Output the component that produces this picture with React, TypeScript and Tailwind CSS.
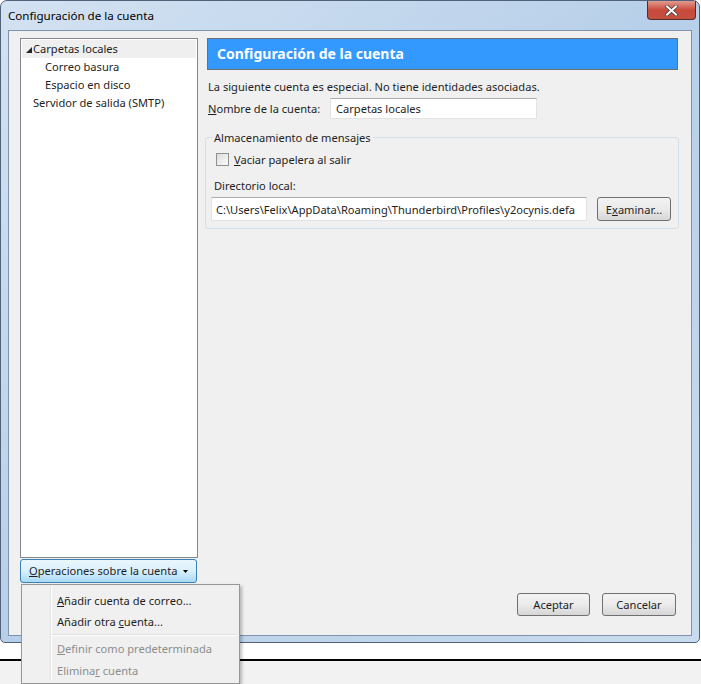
const treeItems = [
    { label: 'Correo basura' },
    { label: 'Espacio en disco' },
];

const Btn = ({ children, className = '' }: { children: React.ReactNode; className?: string }) => (
    <div className={`flex items-center justify-center h-[23px] border border-[#707070] rounded-[3px] bg-gradient-to-b from-[#f2f2f2] via-[#ebebeb] to-[#d6d6d6] text-[#1e1e1e] ${className}`}>
        {children}
    </div>
);

const App = () => {
    return (
        <div className="relative w-[701px] h-[684px] overflow-hidden bg-white text-[11.1px] leading-none text-[#1e1e1e] font-['Noto_Sans',sans-serif]">
            {/* Window */}
            <div className="h-[643px] w-[700px] flex flex-col rounded-t-[7px] rounded-b-[5px] border border-[#4f627a] bg-gradient-to-br from-[#d3e2f2] via-[#b7cfe9] to-[#c9dbee] px-[7px] pb-[6px]">
                {/* Title bar */}
                <div className="h-[29px] flex items-start justify-between">
                    <span className="pt-[9px] text-[11.6px] text-black">Configuración de la cuenta</span>
                    <div className="mr-[-4px] w-[49px] h-[19px] rounded-b-[4px] border border-t-0 border-[#5a2a2a] bg-gradient-to-b from-[#e19a8f] via-[#c9493c] to-[#c2503f] flex items-center justify-center">
                        <svg width="13" height="11" viewBox="0 0 13 11">
                            <path d="M2 1.5 L11 9.5 M11 1.5 L2 9.5" stroke="#3a3a3a" strokeWidth="3.4" strokeLinecap="square" />
                            <path d="M2 1.5 L11 9.5 M11 1.5 L2 9.5" stroke="#ffffff" strokeWidth="2" strokeLinecap="square" />
                        </svg>
                    </div>
                </div>

                {/* Client area */}
                <div className="flex-1 flex border border-[#7f93ab] bg-[#f0f0f0] pl-[11px] pr-[13px] pt-[7px]">
                    {/* Left column */}
                    <div className="w-[178px] flex flex-col">
                        <div className="h-[520px] bg-white border border-[#828790] pt-[1px] px-[1px]">
                            <div className="h-[18px] flex items-center bg-[#efefef]">
                                <svg width="9" height="9" viewBox="0 0 9 9" className="ml-[2px]">
                                    <polygon points="8,2 8,8 2,8" fill="#262626" />
                                </svg>
                                <span>Carpetas locales</span>
                            </div>
                            {treeItems.map((item) => (
                                <div key={item.label} className="h-[18px] flex items-center pl-[23px]">
                                    {item.label}
                                </div>
                            ))}
                            <div className="h-[18px] flex items-center pl-[11px]">Servidor de salida (SMTP)</div>
                        </div>
                        <div className="mt-[1px] w-[177px] h-[24px] flex items-center whitespace-nowrap pl-[8px] border border-[#3c7fb1] rounded-[3px] bg-gradient-to-b from-[#eaf6fd] via-[#d9f0fc] to-[#a7d9f5]">
                            <span><span className="underline">O</span>peraciones sobre la cuenta</span>
                            <svg width="5" height="3" viewBox="0 0 5 3" className="ml-[6px]">
                                <polygon points="0,0 5,0 2.5,3" fill="#000" />
                            </svg>
                        </div>
                    </div>

                    {/* Right column */}
                    <div className="flex-1 flex flex-col ml-[9px]">
                        <div className="h-[32px] bg-[#3399ff] border border-[#6f6f6f] flex items-center pl-[9px] text-white font-bold text-[14px]">
                            Configuración de la cuenta
                        </div>
                        <div className="mt-[11px] pl-[1px]">La siguiente cuenta es especial. No tiene identidades asociadas.</div>
                        <div className="mt-[6px] flex items-center pl-[1px]">
                            <span className="w-[122px]"><span className="underline">N</span>ombre de la cuenta:</span>
                            <div className="w-[207px] h-[21px] bg-white border border-[#e3e3e3] border-t-[#abadb3] flex items-center pl-[5px]">Carpetas locales</div>
                        </div>

                        {/* Group box */}
                        <div className="relative mt-[18px] mr-[-1px] ml-[-2px] h-[92px] border border-[#d5dfe5] rounded-[3px] px-[5px] pt-[15px]">
                            <span className="absolute top-[-6px] left-[6px] bg-[#f0f0f0] px-[2px]">Almacenamiento de mensajes</span>
                            <div className="flex items-center pl-[5px]">
                                <div className="w-[13px] h-[13px] border border-[#8e8f8f] bg-gradient-to-br from-[#dcdcdc] to-[#fbfbfb] mr-[5px]" />
                                <span><span className="underline">V</span>aciar papelera al salir</span>
                            </div>
                            <div className="mt-[14px] pl-[3px]">Directorio local:</div>
                            <div className="mt-[6px] flex items-center">
                                <div className="w-[376px] h-[24px] bg-white border border-[#e3e3e3] border-t-[#abadb3] flex items-center pl-[4px] overflow-hidden whitespace-nowrap">
                                    C:\Users\Felix\AppData\Roaming\Thunderbird\Profiles\y2ocynis.defa
                                </div>
                                <Btn className="ml-[10px] w-[74px] h-[24px]">
                                    <span>E<span className="underline">x</span>aminar...</span>
                                </Btn>
                            </div>
                        </div>

                        <div className="flex-1" />
                        <div className="flex justify-end gap-[12px] mb-[19px] mr-[2px]">
                            <Btn className="w-[73px]">Aceptar</Btn>
                            <Btn className="w-[74px]">Cancelar</Btn>
                        </div>
                    </div>
                </div>
            </div>

            {/* Below the window */}
            <div className="h-[16px] bg-white" />
            <div className="h-[2px] bg-black" />
            <div className="h-[30px] bg-[#f2f2f2]" />

            {/* Open dropdown menu */}
            <div className="absolute left-[21px] top-[584px] w-[219px] h-[100px] bg-[#f0f0f0] border border-[#979797] shadow-[2px_2px_3px_rgba(0,0,0,0.25)] flex flex-col pt-[5px] pr-[2px]">
                <div className="absolute left-[28px] top-[2px] bottom-[2px] w-px bg-[#e2e3e3]" />
                <div className="absolute left-[29px] top-[2px] bottom-[2px] w-px bg-white" />
                <div className="h-[21px] flex items-center pl-[35px]"><span><span className="underline">A</span>ñadir cuenta de correo...</span></div>
                <div className="h-[21px] flex items-center pl-[35px]"><span>Añadir otra <span className="underline">c</span>uenta...</span></div>
                <div className="h-[6px] flex flex-col justify-center ml-[30px]">
                    <div className="h-px bg-[#e0e0e0]" />
                    <div className="h-px bg-white" />
                </div>
                <div className="h-[22px] flex items-center pl-[35px] text-[#8d8d8d]"><span><span className="underline">D</span>efinir como predeterminada</span></div>
                <div className="h-[22px] flex items-center pl-[35px] text-[#8d8d8d]"><span>Elimina<span className="underline">r</span> cuenta</span></div>
            </div>
        </div>
    );
};

export default App;
